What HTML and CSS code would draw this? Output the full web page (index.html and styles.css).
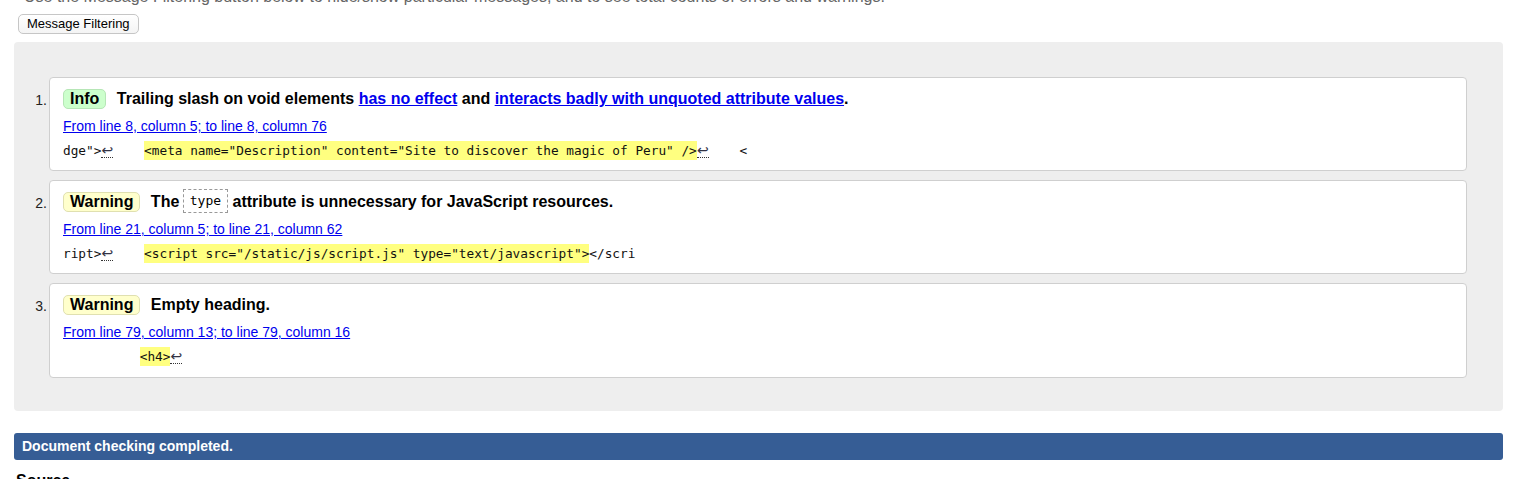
FILE: index.html
```html
<!DOCTYPE html>
<html>
<head>
<meta charset="utf-8">
<link rel="stylesheet" href="styles.css">
</head>
<body>
<p class="intro">Use the Message Filtering button below to hide/show particular messages, and to see total counts of errors and warnings.</p>
<div class="filter-row"><button class="filter-btn">Message Filtering</button></div>
<div class="results">
  <ol class="messages">
    <li class="msg info">
      <p class="title"><strong class="badge">Info</strong> <span>Trailing slash on void elements <a href="#">has no effect</a> and <a href="#">interacts badly with unquoted attribute values</a>.</span></p>
      <p class="loc"><a href="#">From line 8, column 5; to line 8, column 76</a></p>
      <p class="extract"><code>dge"&gt;<span class="lf">↩</span>    <b>&lt;meta name="Description" content="Site to discover the magic of Peru" /&gt;</b><span class="lf">↩</span>    &lt;</code></p>
    </li>
    <li class="msg warning">
      <p class="title"><strong class="badge">Warning</strong> <span>The <code class="attr">type</code> attribute is unnecessary for JavaScript resources.</span></p>
      <p class="loc"><a href="#">From line 21, column 5; to line 21, column 62</a></p>
      <p class="extract"><code>ript&gt;<span class="lf">↩</span>    <b>&lt;script src="/static/js/script.js" type="text/javascript"&gt;</b>&lt;/scri</code></p>
    </li>
    <li class="msg warning last">
      <p class="title"><strong class="badge">Warning</strong> <span>Empty heading.</span></p>
      <p class="loc"><a href="#">From line 79, column 13; to line 79, column 16</a></p>
      <p class="extract"><code>          <b>&lt;h4&gt;</b><span class="lf">↩</span></code></p>
    </li>
  </ol>
</div>
<p class="done">Document checking completed.</p>
<h2 class="source">Source</h2>
</body>
</html>
```
FILE: styles.css
```css
html, body {
  margin: 0;
  padding: 0;
  background: #fff;
}
body {
  font-family: "Liberation Sans", Arial, sans-serif;
  color: #000;
  padding: 0 11px 0 14px;
  overflow: hidden;
}
.intro {
  margin: -13px 0 0 10px;
  font-size: 16px;
  line-height: 20px;
  color: #666;
  white-space: nowrap;
}
.filter-row {
  margin: 7px 0 0 4px;
  height: 20px;
}
.filter-btn {
  font-family: "Liberation Sans", Arial, sans-serif;
  font-size: 13px;
  line-height: 16px;
  height: 20px;
  padding: 1px 8px;
  border: 1px solid #c6c6c6;
  border-radius: 5px;
  background: linear-gradient(#fff, #f4f4f4);
  color: #000;
}
.results {
  margin-top: 8px;
  background: #eee;
  border-radius: 4px;
  padding: 35px 36px 33px 35px;
}
.messages {
  margin: 0;
  padding: 0;
  list-style: none;
  counter-reset: msg;
  display: flex;
  flex-direction: column;
  gap: 9px;
}
.msg {
  counter-increment: msg;
  position: relative;
  background: #fff;
  border: 1px solid #cfcfcf;
  border-radius: 4px;
  padding: 10px 13px 9px 13px;
}
.msg.last {
  padding-bottom: 10px;
}
.msg::before {
  content: counter(msg) ".";
  position: absolute;
  left: -31px;
  top: 13px;
  width: 28px;
  text-align: right;
  font-size: 14px;
  line-height: 18px;
  color: #222;
}
.msg p {
  margin: 0;
}
.title {
  font-size: 16px;
  font-weight: bold;
  line-height: 22px;
  height: 22px;
}
.badge {
  display: inline-block;
  line-height: 18px;
  padding: 0 6px;
  border-radius: 5px;
  margin-right: 6px;
}
.info .badge {
  background: #ccffcc;
  border: 1px solid #b6e6b6;
}
.warning .badge {
  background: #ffffcc;
  border: 1px solid #e0e0b0;
}
.title a {
  color: #0000ee;
}
.attr {
  font-family: "DejaVu Sans Mono", monospace;
  font-weight: normal;
  font-size: 13px;
  line-height: 18px;
  display: inline-block;
  padding: 2px 6px;
  border: 1px dashed #999;
  vertical-align: middle;
  margin-top: -4px;
  margin-left: -1px;
}
.loc {
  margin-top: 6px !important;
  font-size: 14px;
  line-height: 20px;
}
.loc a {
  color: #0000ee;
}
.extract {
  margin-top: 5px !important;
  font-size: 12.75px;
  line-height: 20px;
  height: 20px;
}
.extract code {
  font-family: "DejaVu Sans Mono", monospace;
  white-space: pre;
  color: #111;
}
.extract b {
  font-weight: normal;
  background: #ffff80;
  padding: 2px 0;
}
.lf {
  display: inline-block;
  width: 12px;
  text-align: center;
  font-family: "DejaVu Sans", sans-serif;
  font-size: 14px;
  line-height: 13px;
  border-bottom: 1px dotted #333;
  color: #334;
}
.done {
  margin: 22px 0 0 0;
  background: #365d95;
  color: #fff;
  font-weight: bold;
  font-size: 14px;
  line-height: 27px;
  padding: 0 8px;
  border-radius: 3px;
}
.source {
  margin: 11px 0 0 2px;
  font-size: 16px;
  line-height: 20px;
}
```
